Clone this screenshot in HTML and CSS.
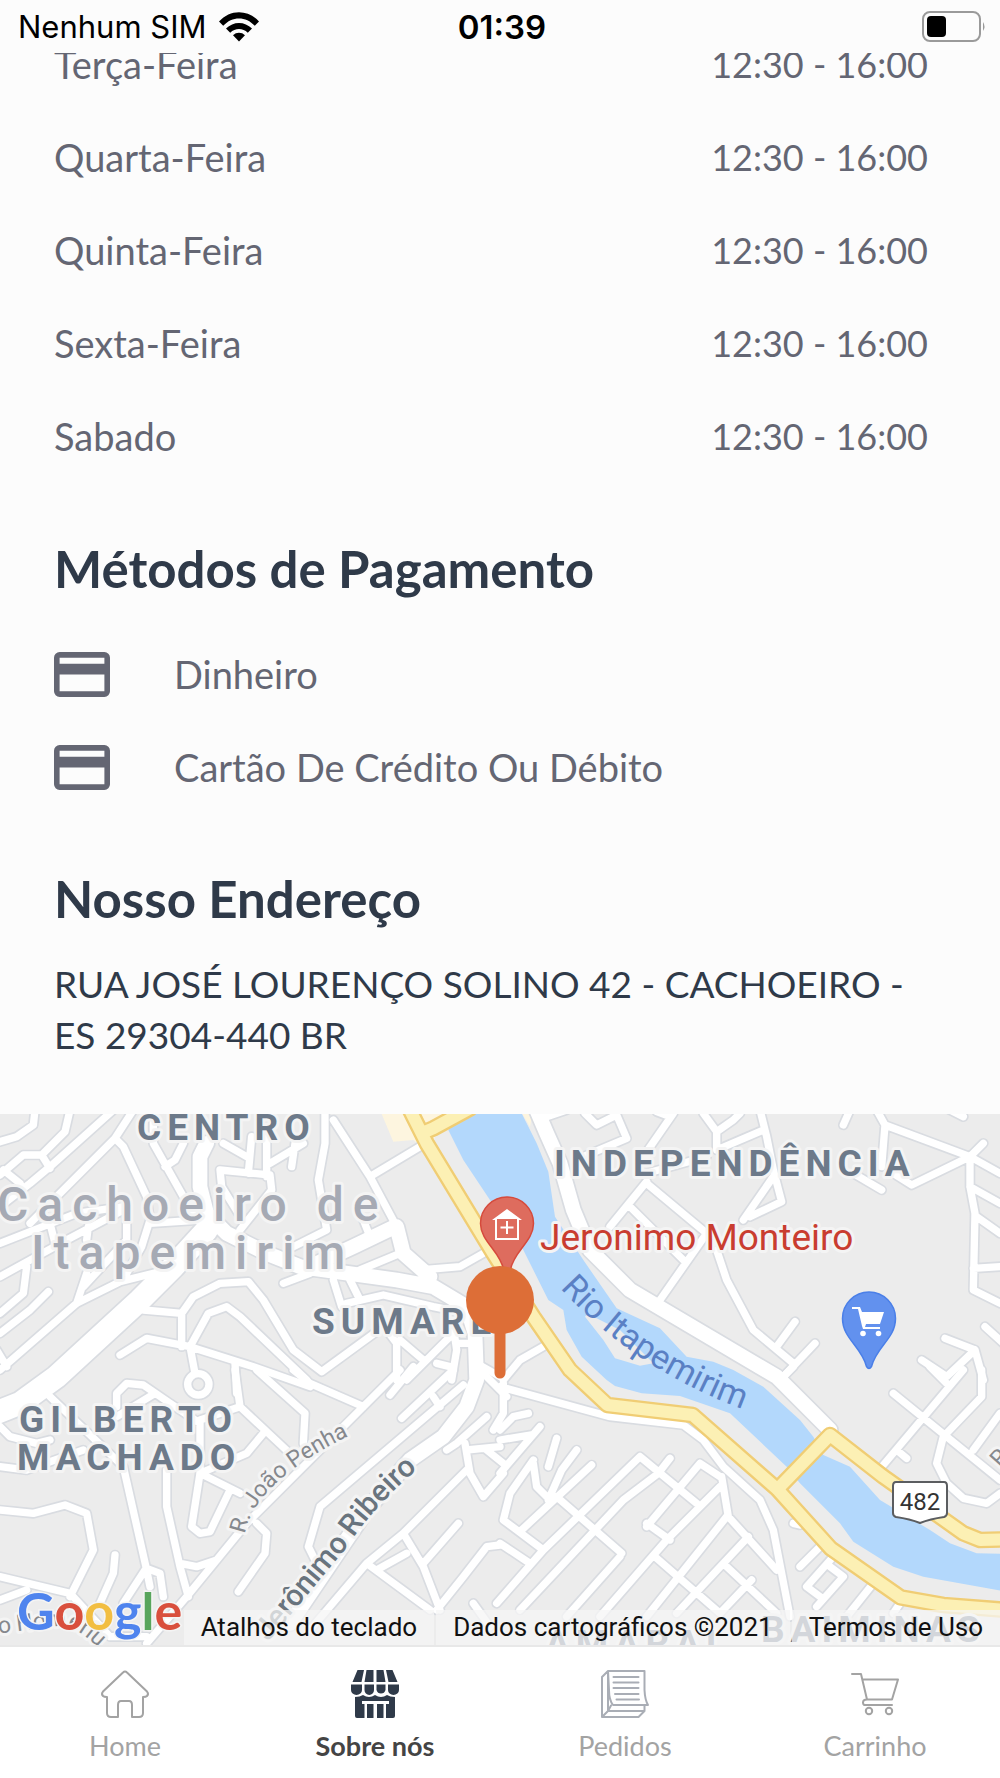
FILE: index.html
```html
<!DOCTYPE html>
<html lang="pt-BR">
<head>
<meta charset="utf-8">
<meta name="viewport" content="width=device-width, initial-scale=1">
<title>Sobre nós</title>
<link rel="stylesheet" href="styles.css">
</head>
<body>
<header class="status">
  <div class="status-carrier">
    <span>Nenhum SIM</span>
    <svg class="wifi" viewBox="0 0 40 30" aria-hidden="true">
      <path d="M0 9.500C11-3 29-3 40 9.500l-4.200 4.300C27 4 13 4 4.200 13.800z"/>
      <path d="M7 16.500c7.300-7.500 18.700-7.500 26 0l-4.200 4.200c-5-5-12.600-5-17.600 0z"/>
      <path d="M14 23.300c3.400-3.300 8.600-3.300 12 0l-6 6.200z"/>
    </svg>
  </div>
  <time class="status-time">01:39</time>
  <div class="status-battery">
    <svg class="battery" viewBox="0 0 64 32" aria-hidden="true">
      <rect x="1" y="1" width="57" height="29" rx="7" fill="none" stroke="#9a9a9a" stroke-width="2"/>
      <rect x="5" y="5" width="19" height="21" rx="4"/>
      <path d="M61 11q3 4.500 0 9z" fill="#9a9a9a"/>
    </svg>
  </div>
</header>

<main class="content">
  <table class="hours">
    <tbody>
      <tr><th scope="row">Terça-Feira</th><td>12:30 - 16:00</td></tr>
      <tr><th scope="row">Quarta-Feira</th><td>12:30 - 16:00</td></tr>
      <tr><th scope="row">Quinta-Feira</th><td>12:30 - 16:00</td></tr>
      <tr><th scope="row">Sexta-Feira</th><td>12:30 - 16:00</td></tr>
      <tr><th scope="row">Sabado</th><td>12:30 - 16:00</td></tr>
    </tbody>
  </table>

  <section class="payment">
    <h2>Métodos de Pagamento</h2>
    <ul class="methods">
      <li>
        <svg class="card" viewBox="0 0 20 16" aria-hidden="true"><path fill-rule="evenodd" d="M2 0h16a2 2 0 0 1 2 2v12a2 2 0 0 1-2 2H2a2 2 0 0 1-2-2V2a2 2 0 0 1 2-2zm0 2v2.200h16V2zm0 6v6h16V8z"/></svg>
        <span>Dinheiro</span>
      </li>
      <li>
        <svg class="card" viewBox="0 0 20 16" aria-hidden="true"><path fill-rule="evenodd" d="M2 0h16a2 2 0 0 1 2 2v12a2 2 0 0 1-2 2H2a2 2 0 0 1-2-2V2a2 2 0 0 1 2-2zm0 2v2.200h16V2zm0 6v6h16V8z"/></svg>
        <span>Cartão De Crédito Ou Débito</span>
      </li>
    </ul>
  </section>

  <section class="address">
    <h2>Nosso Endereço</h2>
    <address>RUA JOSÉ LOURENÇO SOLINO 42 - CACHOEIRO - ES 29304-440 BR</address>
  </section>
</main>

<section class="map" aria-label="Mapa">
  <svg class="map-canvas" viewBox="0 14 1000 531" preserveAspectRatio="xMidYMid slice">
    <defs>
      <!-- street network, one group per quarter of the map -->
      <g id="streets">
        <path d="M105 30L100 75L50 110L0 125M210 30L195 95L125 165L70 165L0 225M340 30L150 200L90 250L0 320M125 165L150 205M10 210L60 250M400 30L345 115L180 280L90 370M345 115L370 140L440 290L450 360L425 440L380 520M460 60L460 130L550 290L590 360M550 130L525 180L495 200M670 130L740 170M755 110L745 220M800 110L800 230M660 210L810 225L815 270L720 390M660 210L665 260L715 340M810 190L910 130M885 130L875 200M975 30L975 130L955 240L980 390L880 440M1000 60L1110 230L1190 380M1110 230L1260 140M1200 460L1080 510M850 550L930 520M1185 380L1200 450L1260 510L1380 500L1450 460M1000 540L1025 620M1050 540L1080 600M1040 610L1150 585L1300 620L1400 640M1090 360L1110 410M0 430L230 340L370 320M0 530L200 420L370 330M150 370L165 430M265 380L260 420M380 340L380 420L250 560M450 370L600 360M230 610L360 545L500 510M230 610L0 810M0 700L90 630L145 575M0 640L70 580L80 500M260 520L230 610M430 630L545 640L545 740M545 640L580 590L660 550L745 545L790 600L880 750L965 815L1150 680M570 740L625 640L680 620L720 650L920 840M360 765L440 715L570 740L760 800L930 860M570 740L585 820M705 790L710 880M-10 750L20 800M1160 690L1190 730L1190 840M1200 720L1270 780M1360 680L1370 750L1355 840M1350 710L1220 840M1310 790L1350 800M1370 730L1420 730M1430 790L1500 830"/>
        <g transform="translate(0 810)"><path d="M0 170L30 200L110 220L150 210M350 110L350 70L380 40L430 45L510 100L600 160L600 300M150 80L370 290M0 290L80 300L250 240M465 70L350 140M720 110L600 150M790 190L740 250L600 310M705 0L720 110L880 260M770 0L915 130L910 220M880 0L930 40L1090 110M1200 0L1090 110L740 460L560 680L440 820M1240 -10L1170 75M1360 0L1205 145M1390 45L960 410L925 530L960 600M370 290L440 600L450 650M500 300L500 410L540 590L565 680M600 310L575 470L600 490L630 485L690 360M600 310L720 370M0 420L100 430L195 405L260 430L280 540L210 680M0 620L210 670L330 800L440 800M0 690L80 660M345 555L340 610L300 700M435 600L370 700M440 595L480 610L490 680M540 580L590 590L650 570M770 460L800 490L795 550L715 665M1460 140L1370 220L1340 240M1395 220L1410 310L1450 380L1510 310M1400 300L1210 490L1100 580L930 780M1210 490L1270 590L1320 720M1220 550L1130 600M1100 580L1290 720M1375 460L1270 580M1500 525L1460 530L1390 620L1310 720M1420 700L1470 770M1400 240L1500 230M1460 240L1510 280M1440 0L1520 80M1300 80L1320 110"/><circle cx="595" cy="43" r="32"/></g>
        <g transform="translate(1500 0)"><path d="M140 50L200 30M255 40L290 75L350 45L380 115L250 170M520 40L430 170M510 50L470 35M610 40L650 95L700 60L720 40M650 95L650 150L790 90M440 220L620 170M780 30L800 110L820 210L845 305L750 350M820 230L730 360M440 245L330 380M440 250L620 400L480 600M385 315L450 380L550 480M650 450L680 540L760 690L880 790M885 665L830 740M945 730L850 830M1050 30L1030 75M1130 30L1155 75L1145 200M1155 75L1410 170L1450 130M1410 170L1235 255L1180 220M1060 220L1145 270M1350 30L1390 50M1410 170L1500 220M1410 170L1410 260L1425 340L1420 570L1500 610M1410 260L1500 310M1430 350L1500 400M1420 505L1500 500M1455 680L1510 730M1335 715L1425 750L1450 840M1425 750L1340 830L1265 780M10 840L60 780L130 740"/></g>
        <g transform="translate(1500 810)"><path d="M0 50L330 140L550 165L610 210L670 290L780 390L820 480L870 740M0 180L40 140L85 130M0 210L90 195M120 170L0 310M10 40L10 130L-20 180M100 270L30 370L10 450L130 540M100 280L110 350L150 390M170 205L145 290M230 240L185 300L145 390M275 285L65 480M170 380L365 550M420 260L130 540L-10 700M420 260L590 400M510 265L475 310L370 390L60 720M600 280L440 470M600 280L660 320M440 460L510 510M660 350L500 510L300 740M360 560L200 740M680 440L440 740M665 320L685 440L830 600M745 500L530 730M465 560L660 730M755 630L660 730M680 590L830 730M0 520L90 580M900 590L970 520M880 460L900 465M1000 560L920 650L960 680M990 590L1030 620L950 710M1120 640L1040 740M1200 700L1180 730M1180 70L1500 330M1390 0L1150 285M1290 -10L1340 40M1445 0L1445 80L1330 200L1310 280L1340 340L1390 385L1460 400L1500 370M1500 130L1420 240M1190 240L1220 265M850 20L880 -10"/></g>
      </g>
      <g id="avenues">
        <path d="M620 130L600 170L600 260L620 340L680 400L800 460L900 500L1190 540L1300 560L1400 620L1425 700L1430 840L1400 920L1330 1010L1230 1080L1100 1230L870 1570M1185 380L1060 440L930 500M1190 380L1210 460L1290 530"/>
        <path d="M1610 30L1640 100L1680 190L1720 330L1770 450L1890 570L2330 830L2490 990"/>
      </g>
      <path id="highway" d="M1230 30L1280 130L1480 460L1600 650L1710 810L1822 915L2078 945L2332 1168L2492 1345L2702 1492L2830 1515L3020 1530M2332 1168L2490 1005L2650 1130L2890 1300L2940 1320L3020 1318M1265 100L1300 85L1410 25"/>
      <path id="rio" d="M560 188Q608 240 664 272T760 314"/>
      <path id="penha" d="M245 434Q250 405 282 378T360 331"/>
      <path id="ribeiro" d="M268 542L348 446Q372 408 420 367"/>
      <path id="homerlu" d="M-14 535Q30 530 58 526Q78 524 110 560"/>
    </defs>

    <rect class="land" y="-600" x="-600" width="2200" height="1800"/>
    <g transform="scale(.33333)">
      <path class="quarter" d="M1140 30L1180 125L1240 120L1290 160L1330 30zM1560 30L1590 80L1600 30z"/>
      <path class="water" d="M1345 90L1390 180L1470 300L1570 450L1645 600L1690 630L1700 690L1745 770L1820 840L1845 858L1925 880L2040 888L2190 940L2360 1100L2400 1150L2520 1270L2560 1325L2680 1400L2770 1430L3020 1475L3020 1362L2930 1360L2850 1330L2790 1290L2640 1200L2550 1100L2470 1065L2440 1010L2400 960L2290 860L2200 810L2140 785L2060 770L1980 685L1850 625L1750 480L1665 350L1645 215L1610 130L1560 30L1410 30z"/>
      <path class="land" d="M1755 650Q1760 640 1790 655L1860 690L1960 790L1920 797L1845 775L1810 720z"/>
      <use href="#streets" class="street-edge"/>
      <use href="#avenues" class="avenue-edge"/>
      <path class="boulevard-edge" d="M620 390L520 500L420 600L170 830L60 910L-40 950"/>
      <use href="#streets" class="street"/>
      <use href="#avenues" class="avenue"/>
      <path class="boulevard" d="M620 390L520 500L420 600L170 830L60 910L-40 950"/>
      <use href="#highway" class="highway-edge"/>
      <use href="#highway" class="highway"/>
    </g>

    <g class="district">
      <text x="137" y="40">CENTRO</text>
      <text x="554" y="76">INDEPENDÊNCIA</text>
      <text x="312" y="234">SUMARÉ</text>
      <text x="19" y="332">GILBERTO</text>
      <text x="17" y="370">MACHADO</text>
      <text x="545" y="556">AMARAL</text>
      <text x="761" y="542">BAIMINAS</text>
    </g>
    <g class="city">
      <text x="-3" y="121">Cachoeiro de</text>
      <text x="31" y="169">Itapemirim</text>
    </g>
    <text class="river-name"><textPath href="#rio">Rio Itapemirim</textPath></text>
    <text class="street-name"><textPath href="#penha">R. João Penha</textPath></text>
    <text class="street-name"><textPath href="#homerlu">no Homerlu</textPath></text>
    <text class="street-name" transform="translate(1000 368) rotate(-48)">R</text>
    <text class="avenue-name"><textPath href="#ribeiro">Jerônimo Ribeiro</textPath></text>

    <path d="M896 382h48q3 0 3 4v27q0 3-3 4q-14 2-24 6q-10-4-24-6q-3-1-3-4v-27q0-4 3-4z" fill="#fff" stroke="#5b5d60" stroke-width="2"/>
    <text class="route" x="920" y="410">482</text>

    <path d="M507 97a26.500 26.500 0 0 1 26.500 26.500c0 18-20 28-23 46q-3.500 6-7 0c-3-18-23-28-23-46A26.500 26.500 0 0 1 507 97z" fill="#de6c5e" stroke="#d64a3c" stroke-width="1.500"/>
    <path d="M507 109l15 11h-3v20h-24v-20h-3z" fill="#fff"/>
    <path d="M497 119h20v19h-20z" fill="#de6c5e"/>
    <path d="M507 121v13M500.500 127.500h13" stroke="#fff" stroke-width="2"/>
    <text class="place" x="540" y="150">Jeronimo Monteiro</text>

    <path d="M869 192a26.500 26.500 0 0 1 26.500 26.500c0 20-19 28-24 48q-2.500 4-5 0c-5-20-24-28-24-48A26.500 26.500 0 0 1 869 192z" fill="#6291ee" stroke="#4a7fe8" stroke-width="1.500"/>
    <path d="M852 207h8l2 5h22l-4 12h-14l-1 3h15v2h-17l-1-3l-4-17h-6z" fill="#fff"/>
    <circle cx="863" cy="233.500" r="2.800" fill="#fff"/><circle cx="878.500" cy="233.500" r="2.800" fill="#fff"/>

    <path d="M500 220v53" stroke="#dd6e37" stroke-width="11" stroke-linecap="round"/>
    <circle cx="500" cy="200" r="34" fill="#dd6e37"/>
  </svg>
  <div class="map-footer">
    <a class="google" href="#" aria-label="Google"><span class="g-blue">G</span><span class="g-red">o</span><span class="g-yellow">o</span><span class="g-blue">g</span><span class="g-green">l</span><span class="g-red">e</span></a>
    <div class="attribution">
      <button type="button">Atalhos do teclado</button>
      <span>Dados cartográficos ©2021</span>
      <a href="#">Termos de Uso</a>
    </div>
  </div>
</section>

<nav class="tabs">
  <a href="#">
    <svg viewBox="0 0 48 48" fill="none" stroke="#a3a3a3" stroke-width="2" stroke-linejoin="round" aria-hidden="true"><path d="M22 2.500q2-2 4 0L46 21.500q2 2.500 0 4.500q-1 1-4 1V43q0 4-4 4H31V35q0-4-3-4H20q-3 0-3 4V47H10q-4 0-4-4V27q-3 0-4-1q-2-2 0-4.500z"/></svg>
    <span>Home</span>
  </a>
  <a href="#" class="active" aria-current="page">
    <svg viewBox="0 0 48 48" fill="#2f3a49" aria-hidden="true"><path d="M6.500 0h6.500l-2.500 12H1.500zM15.500 0H22.500V12H13.500zM25.500 0H32.500L34.500 12H25.500zM35 0H41.500L46.500 12H37.500zM0 14.500H11V20a5.500 5 0 0 1-11 0zM13.500 14.500H23V20a4.700 5 0 0 1-9.500 0zM25.500 14.500H34.500V20a4.700 5 0 0 1-9 0zM37 14.500H48V20a5.500 5 0 0 1-11 0z"/><path fill-rule="evenodd" d="M4 27q5 0 8-2q6 4 12 0q6 4 12 0q3 2 8 2V46q0 2-2 2H35V34h3V31H11v3h2.500V48H6q-2 0-2-2z"/><path d="M16 34h6.500V48H16zM26 34h6.500V48H26z"/></svg>
    <span>Sobre nós</span>
  </a>
  <a href="#">
    <svg viewBox="0 0 48 48" fill="none" stroke="#a9adb5" stroke-width="2" stroke-linejoin="round" stroke-linecap="round" aria-hidden="true"><path d="M7 1H43.500V20Q44 30 47 35H12Q8 30 8 20zM7 1L1 7V47H37.500L43.500 41V35M7 1V41L1 47M7 41H43.500M10 35.500L7 41"/><path d="M12.500 7H37.500M12.500 12.500H37.500M12.500 18H37.500M14 24H37.500M15.500 29.500H38"/></svg>
    <span>Pedidos</span>
  </a>
  <a href="#">
    <svg viewBox="0 0 48 48" fill="none" stroke="#a3a3a3" stroke-width="2" stroke-linejoin="round" stroke-linecap="round" aria-hidden="true"><path d="M1 4H10L16 29.500H41L47 9.500H12M16 29.500q-4 0-4 3t3 2.500H41"/><circle cx="18" cy="41" r="3.200"/><circle cx="38" cy="41" r="3.200"/></svg>
    <span>Carrinho</span>
  </a>
</nav>
</body>
</html>
```
FILE: styles.css
```css
* {
  box-sizing: border-box;
}

body {
  display: flex;
  flex-direction: column;
  min-height: 100vh;
  margin: 0;
  background: #fcfcfc;
  color: #646673;
  font: 38px/51px Lato, "Open Sans", sans-serif;
}

a {
  color: inherit;
  text-decoration: none;
}

/* status bar */
.status {
  position: relative;
  z-index: 1;
  display: grid;
  grid-template-columns: 1fr auto 1fr;
  align-items: center;
  height: 53px;
  padding: 0 14px 0 18px;
  background: #fcfcfc;
  color: #000;
  font: 31px/36px Inter, sans-serif;
}

.status-carrier {
  display: flex;
  align-items: center;
  gap: 12px;
}

.wifi {
  width: 40px;
  height: 30px;
}

.status-time {
  font-size: 33px;
  font-weight: 600;
}

.status-battery {
  display: flex;
  justify-content: flex-end;
}

.battery {
  width: 64px;
  height: 32px;
}

/* shop details */
.content {
  overflow: hidden;
  padding: 0 72px 54px 54px;
}

.hours {
  width: 100%;
  margin-top: -35px;
  border-collapse: collapse;
}

.hours tr {
  height: 93px;
}

.hours th,
.hours td {
  padding: 0;
  font-weight: 400;
  text-align: left;
}

.hours td {
  font-size: 36px;
  text-align: right;
}

h2 {
  margin: 0;
  color: #2f3a49;
  font-size: 51px;
  line-height: 60px;
  font-weight: 700;
}

.payment {
  padding-top: 56px;
}

.methods {
  margin: 29px 0 0;
  padding: 0;
  list-style: none;
}

.methods li {
  display: flex;
  align-items: center;
  gap: 64px;
  height: 93px;
}

.card {
  width: 56px;
  height: 45px;
  fill: #646673;
}

.address {
  padding-top: 55px;
}

.address address {
  margin-top: 29px;
  color: #2f3a49;
  font-size: 37px;
  font-style: normal;
}

/* map */
.map {
  position: relative;
  display: flex;
  flex: 1 0 400px;
  flex-direction: column;
  justify-content: flex-end;
  overflow: hidden;
  font-family: Roboto, sans-serif;
}

.map-canvas {
  position: absolute;
  inset: 0;
  width: 100%;
  height: 100%;
}

.land {
  fill: #ececec;
}

.quarter {
  fill: #fdf5df;
}

.water {
  fill: #b3d8fc;
}

.street,
.street-edge,
.avenue,
.avenue-edge,
.boulevard,
.boulevard-edge,
.highway,
.highway-edge {
  fill: none;
  stroke: #fff;
  stroke-width: 22;
  stroke-linecap: round;
  stroke-linejoin: round;
}

.street-edge {
  stroke: #d9dce1;
  stroke-width: 32;
}

.avenue {
  stroke-width: 44;
}

.avenue-edge {
  stroke: #d9dce1;
  stroke-width: 54;
}

.boulevard {
  stroke-width: 68;
}

.boulevard-edge {
  stroke: #d9dce1;
  stroke-width: 78;
}

.highway {
  stroke: #fcf0b4;
  stroke-width: 36;
}

.highway-edge {
  stroke: #f0cd74;
  stroke-width: 50;
}

.map-canvas text {
  stroke: #f4f4f4;
  stroke-width: 6px;
  stroke-linejoin: round;
  paint-order: stroke;
}

.district {
  fill: #6d7a8a;
  font-size: 37px;
  font-weight: 700;
  letter-spacing: 6px;
}

.city {
  fill: #a6aab4;
  font-size: 48px;
  font-weight: 500;
  letter-spacing: 9px;
}

.map-canvas .river-name {
  fill: #5a80c4;
  stroke: none;
  font-size: 34px;
}

.street-name {
  fill: #85888d;
  font-size: 23px;
}

.avenue-name {
  fill: #69747e;
  font-size: 30px;
  font-weight: 500;
}

.map-canvas .route {
  fill: #333;
  stroke: none;
  font-size: 24px;
  text-anchor: middle;
}

.place {
  fill: #c93d30;
  font-size: 37px;
}

.map-footer {
  position: relative;
  display: flex;
  align-items: flex-end;
  justify-content: space-between;
  padding-left: 17px;
}

.google {
  font: 700 52px/70px Lato, sans-serif;
  -webkit-text-stroke: 3px #f4f4f4;
  paint-order: stroke;
}

.g-blue { color: #4f84ee; }
.g-red { color: #d94f3d; }
.g-yellow { color: #f2be42; }
.g-green { color: #58a55c; }

.attribution {
  display: flex;
  gap: 2px;
  color: #111;
  font-size: 26px;
  line-height: 35px;
  white-space: nowrap;
}

.attribution > * {
  padding: 0 17px;
  border: 0;
  background: rgba(245, 245, 245, .75);
  color: inherit;
  font: inherit;
}

/* bottom tabs */
.tabs {
  display: grid;
  grid-template-columns: repeat(4, 1fr);
  height: 133px;
  padding-top: 23px;
  border-top: 2px solid #e8e8e8;
  background: #fff;
  color: #a3a3a3;
  font-size: 27px;
  line-height: 34px;
}

.tabs a {
  display: flex;
  flex-direction: column;
  align-items: center;
  gap: 11px;
}

.tabs svg {
  width: 48px;
  height: 48px;
  overflow: visible;
}

.tabs .active {
  color: #444;
  font-weight: 700;
}
```
